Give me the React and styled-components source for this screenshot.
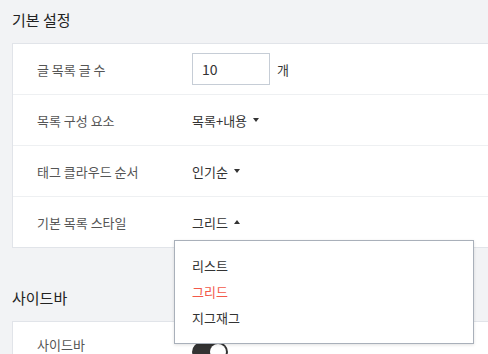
import React from "react";
import styled, { createGlobalStyle } from "styled-components";

const Global = createGlobalStyle`
  html, body { margin: 0; padding: 0; }
  body {
    background: #f2f3f5;
    font-family: "Noto Sans CJK KR", "Noto Sans", sans-serif;
    color: #333;
    overflow: hidden;
  }
`;

const Page = styled.div`
  padding: 8px 0 0 12px;
  width: 488px;
  box-sizing: border-box;
`;

const SectionTitle = styled.h2`
  margin: ${(p) => (p.$first ? "0" : "38px")} 0 11px;
  font-size: 15px;
  font-weight: 400;
  line-height: 24px;
  color: #222;
`;

const Panel = styled.div`
  background: #fff;
  border: 1px solid #e1e4e9;
  border-right: none;
`;

const Row = styled.div`
  display: flex;
  align-items: ${(p) => (p.$top ? "flex-start" : "center")};
  height: ${(p) => (p.$top ? "37px" : "50px")};
  padding-top: ${(p) => (p.$top ? "13px" : "0")};
  & + & { border-top: 1px solid #eef0f2; }
`;

const Label = styled.div`
  width: 155px;
  padding-left: 24px;
  font-size: 13px;
  line-height: 19px;
  color: #555;
`;

const Value = styled.div`
  position: relative;
  display: flex;
  align-items: center;
  font-size: 13px;
  color: #333;
`;

const NumInput = styled.input`
  box-sizing: border-box;
  width: 78px;
  height: 32px;
  border: 1px solid #c6cdd6;
  padding: 0 9px;
  font-family: inherit;
  font-size: 14px;
  color: #333;
  outline: none;
`;

const Unit = styled.span`
  margin-left: 7px;
`;

const Select = styled.span`
  display: inline-flex;
  align-items: center;
  gap: 6px;
  cursor: pointer;
`;

const Caret = styled.span`
  width: 0;
  height: 0;
  border-left: 3.5px solid transparent;
  border-right: 3.5px solid transparent;
  ${(p) =>
    p.$up
      ? "border-bottom: 4px solid #333;"
      : "border-top: 4px solid #333;"}
`;

const Menu = styled.ul`
  position: absolute;
  left: -18px;
  top: 27px;
  z-index: 2;
  width: 300px;
  box-sizing: border-box;
  margin: 0;
  padding: 12px 0;
  list-style: none;
  background: #fff;
  border: 1px solid #a9b0ba;
  box-shadow: 0 1px 3px rgba(0, 0, 0, 0.12);
`;

const MenuItem = styled.li`
  padding-left: 17px;
  line-height: 26px;
  font-size: 13px;
  color: ${(p) => (p.$active ? "#f3594a" : "#333")};
`;

const ToggleCell = styled.div`
  margin-top: 7px;
`;

const Toggle = styled.span`
  position: relative;
  display: block;
  width: 36px;
  height: 20px;
  border-radius: 10px;
  background: #333;
  &::after {
    content: "";
    position: absolute;
    right: 2px;
    top: 2px;
    width: 16px;
    height: 16px;
    border-radius: 50%;
    background: #fff;
  }
`;

export default function App() {
  return (
    <>
      <Global />
      <Page>
        <SectionTitle $first>기본 설정</SectionTitle>
        <Panel>
          <Row>
            <Label>글 목록 글 수</Label>
            <Value>
              <NumInput defaultValue="10" />
              <Unit>개</Unit>
            </Value>
          </Row>
          <Row>
            <Label>목록 구성 요소</Label>
            <Value>
              <Select>
                목록+내용 <Caret />
              </Select>
            </Value>
          </Row>
          <Row>
            <Label>태그 클라우드 순서</Label>
            <Value>
              <Select>
                인기순 <Caret />
              </Select>
            </Value>
          </Row>
          <Row>
            <Label>기본 목록 스타일</Label>
            <Value>
              <Select>
                그리드 <Caret $up />
              </Select>
              <Menu>
                <MenuItem>리스트</MenuItem>
                <MenuItem $active>그리드</MenuItem>
                <MenuItem>지그재그</MenuItem>
              </Menu>
            </Value>
          </Row>
        </Panel>
        <SectionTitle>사이드바</SectionTitle>
        <Panel>
          <Row $top>
            <Label>사이드바</Label>
            <ToggleCell>
              <Toggle />
            </ToggleCell>
          </Row>
        </Panel>
      </Page>
    </>
  );
}
